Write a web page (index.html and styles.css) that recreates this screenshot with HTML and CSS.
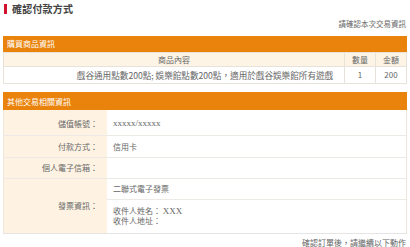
FILE: index.html
```html
<!DOCTYPE html>
<html>
<head>
	<meta charset="utf-8">
	<title>確認付款方式</title>
	<link rel="stylesheet" href="styles.css">
</head>
<body>
	<h1 class="page-title"><span class="title-bar"></span>確認付款方式</h1>
	<p class="note">請確認本次交易資訊</p>

	<div class="box">
		<div class="box-head">購買商品資訊</div>
		<table class="goods">
			<tr class="goods-head">
				<th>商品內容</th>
				<th class="col-num">數量</th>
				<th class="col-num">金額</th>
			</tr>
			<tr>
				<td class="goods-name">戲谷通用點數200點; 娛樂館點數200點，適用於戲谷娛樂館所有遊戲</td>
				<td class="col-num">1</td>
				<td class="col-num">200</td>
			</tr>
		</table>
	</div>

	<div class="box">
		<div class="box-head head-tall">其他交易相關資訊</div>
		<table class="info">
			<tr class="row-1">
				<th>儲值帳號：</th>
				<td><span class="latin">xxxxx/xxxxx</span></td>
			</tr>
			<tr class="row-2">
				<th>付款方式：</th>
				<td>信用卡</td>
			</tr>
			<tr class="row-3">
				<th>個人電子信箱：</th>
				<td></td>
			</tr>
			<tr>
				<th>發票資訊：</th>
				<td class="invoice">
					<div class="invoice-type">二聯式電子發票</div>
					<div class="invoice-to">
						<div>收件人姓名：&nbsp;<span class="latin">XXX</span></div>
						<div>收件人地址：</div>
					</div>
				</td>
			</tr>
		</table>
	</div>

	<p class="foot">確認訂單後，請繼續以下動作</p>
</body>
</html>
```

FILE: styles.css
```css
body {
	background-color: #FFF;
	color: #666;
	font-family: "Noto Sans CJK TC", "Noto Sans", sans-serif;
	font-size: 8px;
	line-height: 1.2;
	margin: 0;
	padding: 0 3px;
}
.page-title {
	align-items: center;
	color: #444;
	display: flex;
	font-size: 10px;
	font-weight: bold;
	height: 12px;
	letter-spacing: 0.2px;
	margin: 3px 0 0 1px;
}
.title-bar {
	background-color: #D2112C;
	display: inline-block;
	height: 10px;
	margin-right: 5px;
	width: 3px;
}
.note {
	margin: 4px 1px 0 0;
	font-size: 7.5px;
	text-align: right;
}
.box {
	margin-top: 8px;
}
.box-head {
	background-color: #E9830B;
	color: #FFF;
	height: 16px;
	line-height: 16px;
	padding-left: 4px;
}
.head-tall {
	height: 18px;
	line-height: 19px;
}
table {
	border-collapse: collapse;
	width: 100%;
}
.goods th, .goods td {
	border: 1px solid #E8E3DA;
	font-weight: normal;
	padding: 0;
	text-align: center;
}
.goods-head th {
	background-color: #FDF4E6;
	height: 13px;
}
.goods td {
	height: 16px;
}
.goods td.goods-name {
	font-size: 8.6px;
	padding-left: 62px;
}
.goods .col-num {
	width: 30px;
}
.info {
	border-left: 1px solid #EDE6DA;
	border-right: 1px solid #EDE6DA;
	border-bottom: 1px solid #E5E5E5;
}
.info th {
	background-color: #FEF3E3;
	font-weight: normal;
	padding: 0 9px 0 0;
	text-align: right;
	width: 94px;
}
.info td {
	padding: 0 0 0 6px;
}
.info tr + tr th, .info tr + tr td {
	border-top: 1px solid #EDEAE6;
}
.row-1 th, .row-1 td {
	height: 23px;
	padding-top: 2px;
}
.row-2 th, .row-2 td {
	height: 21px;
}
.row-3 th, .row-3 td {
	height: 20px;
}
.info td.invoice {
	padding: 0;
}
.invoice-type {
	border-bottom: 1px solid #EDEAE6;
	height: 20px;
	line-height: 20px;
	padding-left: 6px;
}
.invoice-to {
	line-height: 10px;
	padding: 6px 0 7px 6px;
}
.latin {
	font-family: "Liberation Serif", serif;
	font-size: 9px;
}
.foot {
	margin: 4px 1px 0 0;
	text-align: right;
}
```
